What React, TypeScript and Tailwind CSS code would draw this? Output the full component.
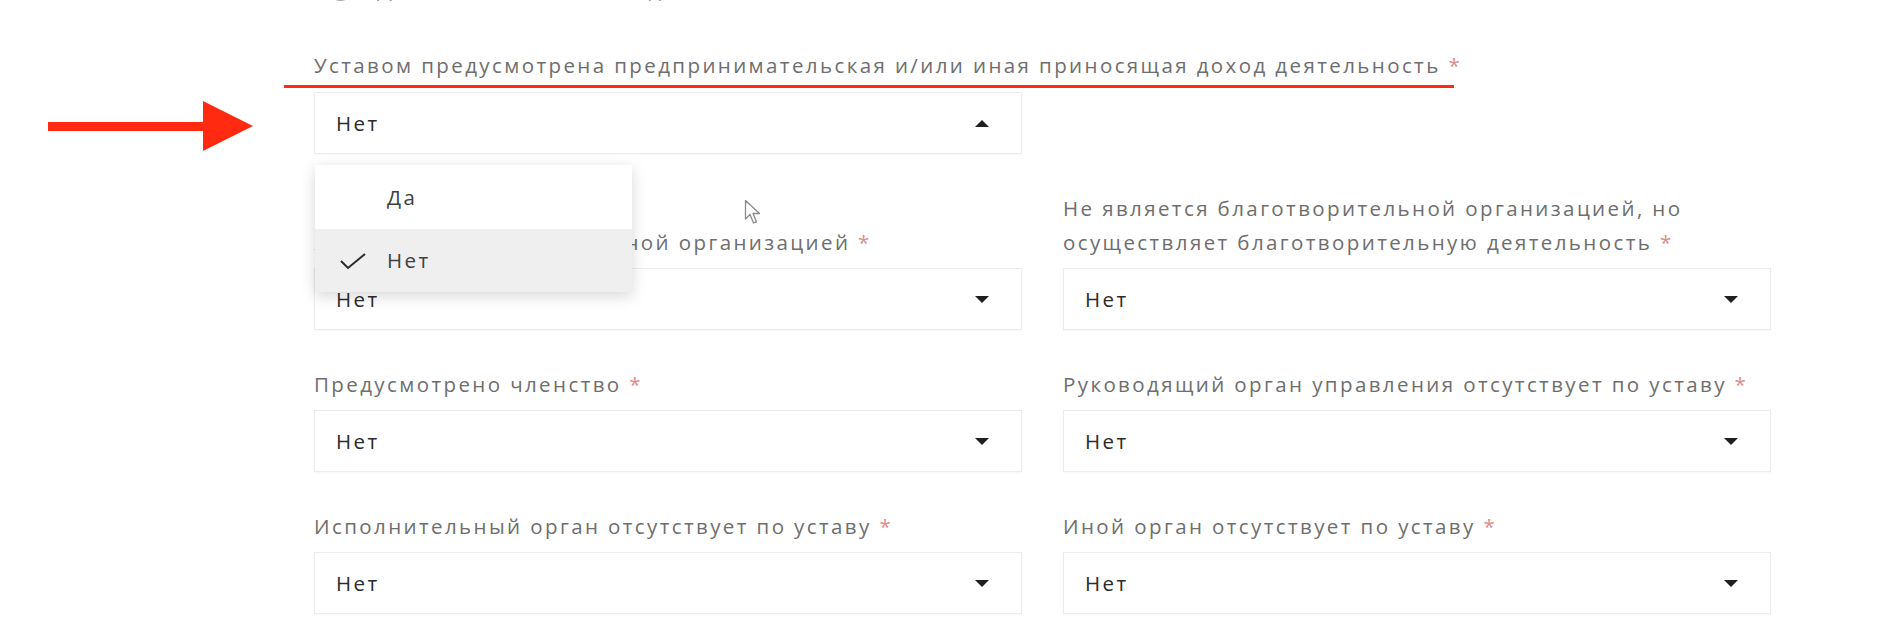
const font = { fontFamily: '"Open Sans", "Noto Sans", sans-serif' };

type Field = {
  label: string;
  value: string;
};

const rows: Field[][] = [
  [
    { label: "Является благотворительной организацией", value: "Нет" },
    {
      label:
        "Не является благотворительной организацией, но осуществляет благотворительную деятельность",
      value: "Нет",
    },
  ],
  [
    { label: "Предусмотрено членство", value: "Нет" },
    { label: "Руководящий орган управления отсутствует по уставу", value: "Нет" },
  ],
  [
    { label: "Исполнительный орган отсутствует по уставу", value: "Нет" },
    { label: "Иной орган отсутствует по уставу", value: "Нет" },
  ],
];

const Caret = ({ up = false }: { up?: boolean }) => (
  <svg width="14" height="7" viewBox="0 0 14 7" className={up ? "rotate-180" : ""}>
    <polygon points="0,0 14,0 7,7" fill="#1f1f1f" />
  </svg>
);

const Label = ({ text }: { text: string }) => (
  <label className="block text-[20.5px] leading-[34px] tracking-[2.4px] text-[#6e6e6e]">
    {text} <span className="text-[#e08a8a]">*</span>
  </label>
);

const Select = ({ value, open = false }: { value: string; open?: boolean }) => (
  <div className="flex h-[62px] w-full items-center justify-between border border-[#ececec] bg-white pl-[21px] pr-[32px] shadow-[0_1px_2px_rgba(0,0,0,0.04)]">
    <span className="text-[20.5px] tracking-[2.4px] text-[#2b2b2b]">{value}</span>
    <Caret up={open} />
  </div>
);

export default function App() {
  return (
    <div className="relative h-[638px] overflow-hidden bg-white" style={font}>
      <div className="ml-[314px] w-[1457px]">
        {/* section heading, mostly scrolled off */}
        <div className="-mt-[25px] flex h-[27px] items-center gap-[24px] pl-[14px] text-[#9a9a9a]">
          <span className="h-[25px] w-[25px] rounded-full border-[3px] border-[#a8a8a8]" />
          <span className="text-[22px] leading-[27px] tracking-[2.4px]">Дополнительные сведения</span>
        </div>

        <div className="mt-[46px]">
          <Label text="Уставом предусмотрена предпринимательская и/или иная приносящая доход деятельность" />
        </div>
        <div className="mt-[10px] w-[708px]">
          <Select value="Нет" open />
        </div>

        <div className="mt-[37px] grid grid-cols-[708px_708px] gap-x-[41px] gap-y-[37px]">
          {rows.flat().map((f) => (
            <div key={f.label} className="flex flex-col justify-end">
              <Label text={f.label} />
              <div className="mt-[9px]">
                <Select value={f.value} />
              </div>
            </div>
          ))}
        </div>
      </div>

      {/* open dropdown menu */}
      <div className="absolute left-[315px] top-[165px] w-[317px] bg-white text-[20.5px] tracking-[2.4px] text-[#404040] shadow-[0_4px_14px_rgba(0,0,0,0.16)]">
        <div className="flex h-[64px] items-center pl-[72px]">Да</div>
        <div className="flex h-[63px] items-center bg-[#efefef] pl-[24px]">
          <svg width="28" height="18" viewBox="0 0 28 18" className="mr-[20px]">
            <path d="M2 9 L9 16 L26 2" fill="none" stroke="#2b2b2b" strokeWidth="2" />
          </svg>
          Нет
        </div>
      </div>

      {/* mouse cursor */}
      <svg
        className="absolute left-[744px] top-[199px]"
        width="22"
        height="27"
        viewBox="0 0 22 27"
      >
        <path
          d="M1.5 1.5 L1.5 20 L6 15.5 L9.5 24 L12.5 22.8 L9 14.5 L15.5 14.5 Z"
          fill="white"
          stroke="#8a8a8a"
          strokeWidth="1.3"
          strokeLinejoin="round"
        />
      </svg>

      {/* annotations */}
      <div className="absolute left-[284px] top-[85px] h-[3px] w-[1170px] bg-[#ff2a10]" />
      <svg className="absolute left-[48px] top-[100px]" width="206" height="52" viewBox="0 0 206 52">
        <rect x="0" y="22" width="157" height="9" fill="#ff2a10" />
        <polygon points="155,1 205,26 155,51" fill="#ff2a10" />
      </svg>
    </div>
  );
}
